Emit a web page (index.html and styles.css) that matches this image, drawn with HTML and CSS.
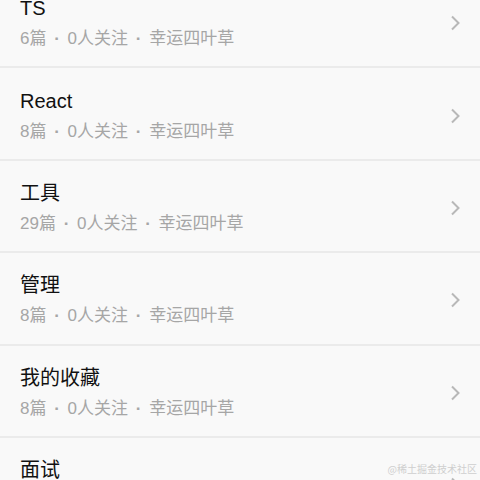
FILE: index.html
```html
<!DOCTYPE html>
<html lang="zh-CN">
<head>
    <meta charset="UTF-8">
    <meta name="viewport" content="width=device-width, initial-scale=1.0">
    <title>专栏</title>
    <link rel="stylesheet" href="styles.css">
</head>
<body>
    <ul class="column-list">
        <li class="column-item">
            <div class="column-info">
                <div class="column-title">TS</div>
                <div class="column-meta">6篇 <span class="dot">·</span> 0人关注 <span class="dot">·</span> 幸运四叶草</div>
            </div>
            <svg class="arrow" width="10" height="16" viewBox="0 0 10 16"><path d="M2 1.5l6.5 6.5-6.5 6.5" fill="none" stroke="#b8b8b8" stroke-width="2"/></svg>
        </li>
        <li class="column-item">
            <div class="column-info">
                <div class="column-title">React</div>
                <div class="column-meta">8篇 <span class="dot">·</span> 0人关注 <span class="dot">·</span> 幸运四叶草</div>
            </div>
            <svg class="arrow" width="10" height="16" viewBox="0 0 10 16"><path d="M2 1.5l6.5 6.5-6.5 6.5" fill="none" stroke="#b8b8b8" stroke-width="2"/></svg>
        </li>
        <li class="column-item">
            <div class="column-info">
                <div class="column-title">工具</div>
                <div class="column-meta">29篇 <span class="dot">·</span> 0人关注 <span class="dot">·</span> 幸运四叶草</div>
            </div>
            <svg class="arrow" width="10" height="16" viewBox="0 0 10 16"><path d="M2 1.5l6.5 6.5-6.5 6.5" fill="none" stroke="#b8b8b8" stroke-width="2"/></svg>
        </li>
        <li class="column-item">
            <div class="column-info">
                <div class="column-title">管理</div>
                <div class="column-meta">8篇 <span class="dot">·</span> 0人关注 <span class="dot">·</span> 幸运四叶草</div>
            </div>
            <svg class="arrow" width="10" height="16" viewBox="0 0 10 16"><path d="M2 1.5l6.5 6.5-6.5 6.5" fill="none" stroke="#b8b8b8" stroke-width="2"/></svg>
        </li>
        <li class="column-item">
            <div class="column-info">
                <div class="column-title">我的收藏</div>
                <div class="column-meta">8篇 <span class="dot">·</span> 0人关注 <span class="dot">·</span> 幸运四叶草</div>
            </div>
            <svg class="arrow" width="10" height="16" viewBox="0 0 10 16"><path d="M2 1.5l6.5 6.5-6.5 6.5" fill="none" stroke="#b8b8b8" stroke-width="2"/></svg>
        </li>
        <li class="column-item">
            <div class="column-info">
                <div class="column-title">面试</div>
                <div class="column-meta">5篇 <span class="dot">·</span> 0人关注 <span class="dot">·</span> 幸运四叶草</div>
            </div>
            <svg class="arrow" width="10" height="16" viewBox="0 0 10 16"><path d="M2 1.5l6.5 6.5-6.5 6.5" fill="none" stroke="#b8b8b8" stroke-width="2"/></svg>
        </li>
    </ul>

    <div class="watermark">@稀土掘金技术社区</div>
</body>
</html>
```

FILE: styles.css
```css
html, body {
    height: 100%;
    overflow: hidden;
}

body {
    margin: 0;
    background-color: #f9f9f9;
    font-family: "Liberation Sans", "Noto Sans CJK SC", sans-serif;
}

.column-list {
    list-style: none;
    margin: -24px 0 0 0;
    padding: 0;
}

.column-item {
    display: flex;
    align-items: center;
    height: 90.4px;
    padding: 0 20px;
    border-bottom: 2px solid #ebebeb;
}

.column-info {
    flex: 1;
    padding-top: 3px;
}

.column-title {
    font-size: 20px;
    line-height: 28px;
    color: #111;
}

.column-meta {
    margin-top: 5px;
    font-size: 17px;
    line-height: 24px;
    word-spacing: 3px;
    color: #a6a6a6;
}

.dot {
    font-weight: bold;
}

.arrow {
    margin-top: 4px;
}

.watermark {
    position: absolute;
    right: 3px;
    bottom: 4px;
    font-size: 10px;
    color: #cfcfcf;
    font-family: "Noto Sans CJK SC", serif;
}
```
